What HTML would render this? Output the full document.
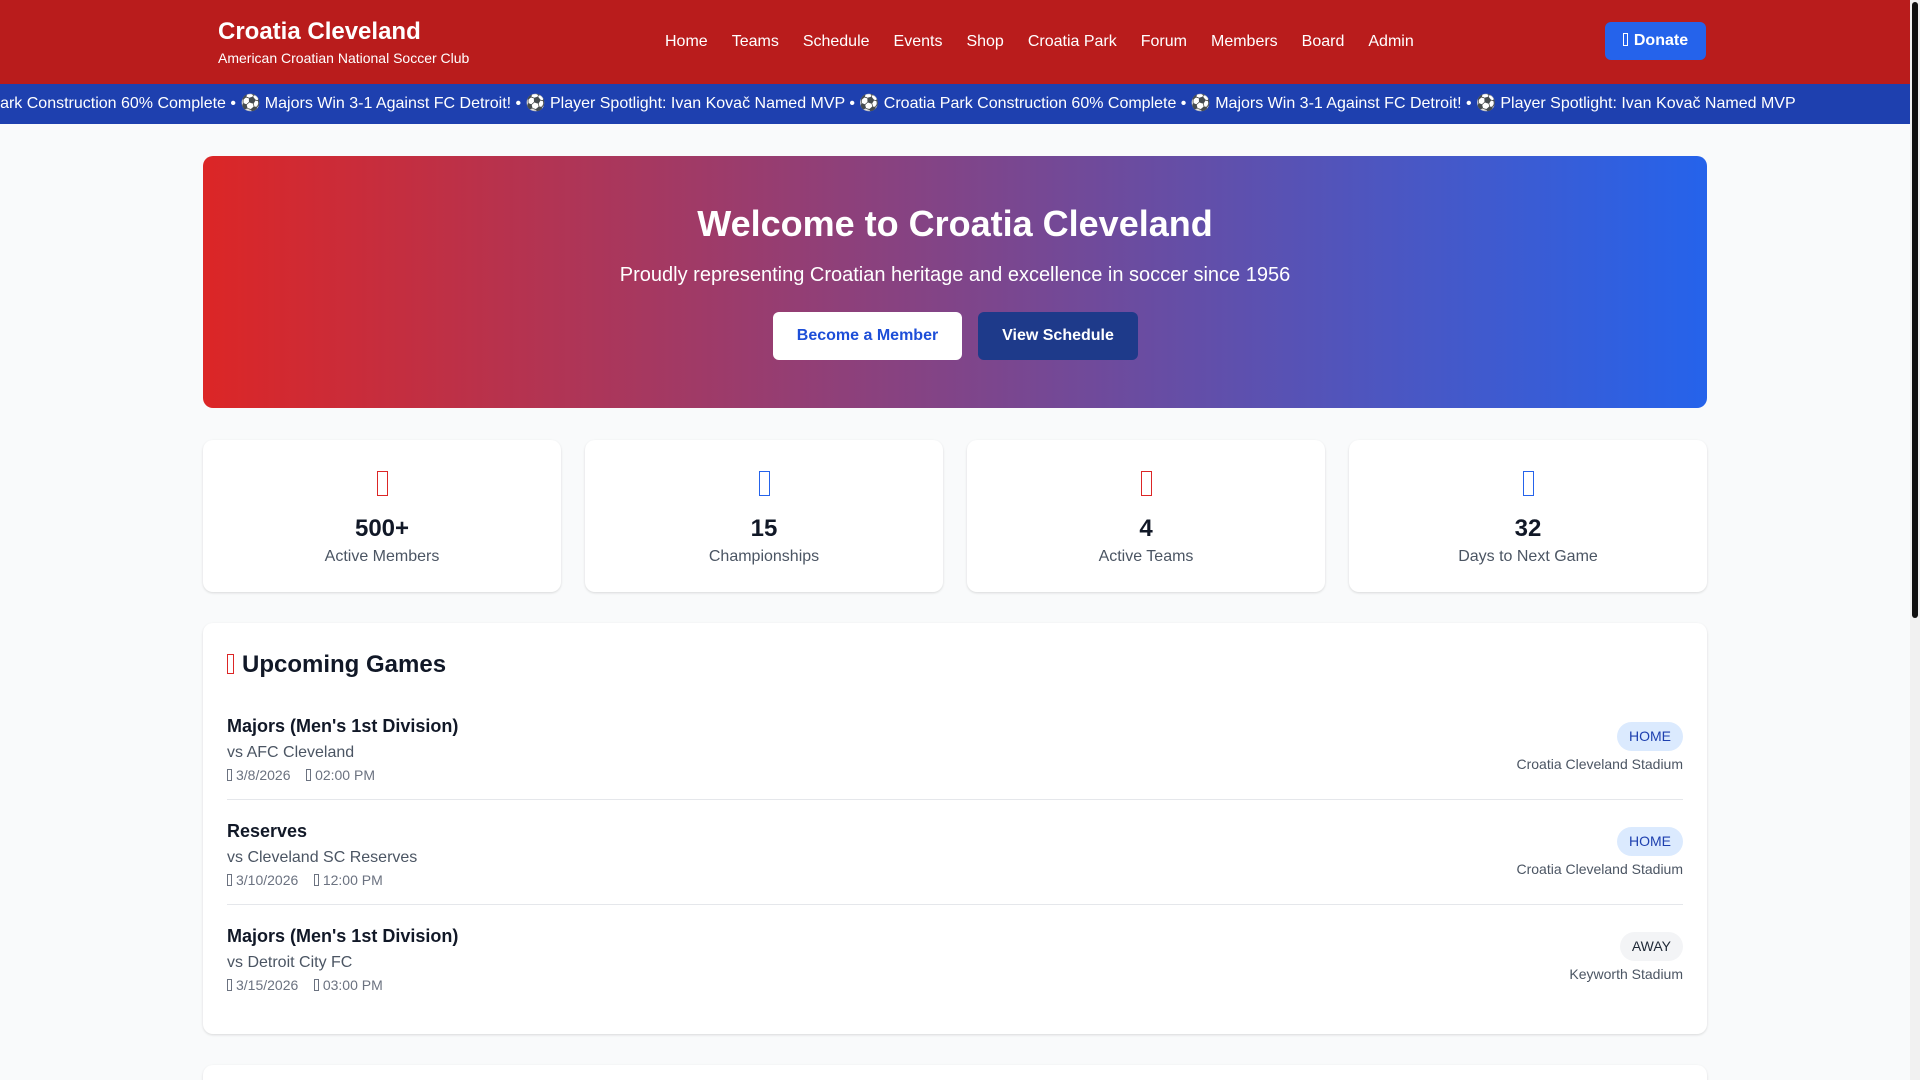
<!DOCTYPE html>
<html><head><meta charset="utf-8">
<style>
*{box-sizing:border-box;margin:0;padding:0}
html,body{width:1920px;height:1080px;overflow:hidden}
body{background:#f9fafb;font-family:"Liberation Sans",Arial,sans-serif;position:relative;color:#111827}
.abs{position:absolute}
.hdr{left:0;top:0;width:1910px;height:84px;background:#b91c1c;color:#fff}
.ticker{left:0;top:84px;width:1910px;height:40px;background:#1e40af;color:#fff;overflow:hidden;white-space:nowrap;font-size:16px;line-height:40px}
.nav a{color:#fff;text-decoration:none;font-size:16px;margin-right:24px}
.tofu{display:inline-block;border:1.5px solid currentColor;vertical-align:middle}
.card{background:#fff;border-radius:10px;box-shadow:0 1px 2px rgba(0,0,0,.08),0 1px 3px rgba(0,0,0,.06)}
.stat{top:440px;width:358px;height:152px;text-align:center}
.stat .tofu{width:11px;height:25px;margin-top:31px}
.stat .n{font-size:24px;font-weight:bold;margin-top:17px;line-height:32px}
.stat .l{font-size:16px;color:#4b5563;line-height:24px}
.row{left:24px;width:1456px;height:105px}
.row .t{position:absolute;top:17px;font-size:18px;font-weight:bold;line-height:28px}
.row .v{position:absolute;top:46px;font-size:16px;color:#4b5563;line-height:24px}
.row .d{position:absolute;top:70px;font-size:14px;color:#6b7280;line-height:20px}
.row .d .tofu{width:5px;height:12px;border-width:1px;margin-right:4px;vertical-align:-1px}
.badge{position:absolute;right:0;top:27px;height:29px;line-height:29px;padding:0 12px;border-radius:15px;font-size:14px}
.home{background:#dbeafe;color:#1e40af}
.away{background:#f3f4f6;color:#1f2937}
.stad{position:absolute;right:0;top:59px;font-size:14px;color:#4b5563;line-height:20px}
.sep{border-bottom:1px solid #e5e7eb}
</style></head><body>
<div class="abs hdr">
  <div class="abs" style="left:218px;top:16px;font-size:24px;font-weight:bold;line-height:32px">Croatia Cleveland</div>
  <div class="abs" style="left:218px;top:48px;font-size:14px;line-height:20px">American Croatian National Soccer Club</div>
  <div class="abs nav" style="left:665px;top:30px;line-height:24px;white-space:nowrap"><a>Home</a><a>Teams</a><a>Schedule</a><a>Events</a><a>Shop</a><a>Croatia Park</a><a>Forum</a><a>Members</a><a>Board</a><a>Admin</a></div>
  <div class="abs" style="left:1605px;top:22px;width:101px;height:38px;background:#2563eb;border-radius:6px;font-weight:bold;font-size:16px;line-height:38px;text-align:center"><span class="tofu" style="width:5px;height:13px;border-width:1px;margin-right:6px;vertical-align:-1px"></span>Donate</div>
</div>
<div class="abs ticker"><div class="abs" style="left:-91px;top:0">⚽ Croatia Park Construction 60% Complete • ⚽ Majors Win 3-1 Against FC Detroit! • ⚽ Player Spotlight: Ivan Kovač Named MVP • ⚽ Croatia Park Construction 60% Complete • ⚽ Majors Win 3-1 Against FC Detroit! • ⚽ Player Spotlight: Ivan Kovač Named MVP</div></div>

<div class="abs" style="left:203px;top:156px;width:1504px;height:252px;border-radius:10px;background:linear-gradient(90deg,#dc2626,#2563eb);color:#fff;text-align:center">
  <div style="font-size:36px;font-weight:bold;line-height:48px;margin-top:44px">Welcome to Croatia Cleveland</div>
  <div style="font-size:20px;line-height:28px;margin-top:13px">Proudly representing Croatian heritage and excellence in soccer since 1956</div>
  <div class="abs" style="left:570px;top:156px;width:189px;height:48px;background:#fff;color:#1d4ed8;border-radius:6px;font-weight:bold;font-size:16px;line-height:48px">Become a Member</div>
  <div class="abs" style="left:775px;top:156px;width:160px;height:48px;background:#1e3a8a;color:#fff;border-radius:6px;font-weight:bold;font-size:16px;line-height:48px">View Schedule</div>
</div>

<div class="abs card stat" style="left:203px"><span class="tofu" style="color:#dc2626"></span><div class="n">500+</div><div class="l">Active Members</div></div>
<div class="abs card stat" style="left:585px"><span class="tofu" style="color:#2563eb"></span><div class="n">15</div><div class="l">Championships</div></div>
<div class="abs card stat" style="left:967px"><span class="tofu" style="color:#dc2626"></span><div class="n">4</div><div class="l">Active Teams</div></div>
<div class="abs card stat" style="left:1349px"><span class="tofu" style="color:#2563eb"></span><div class="n">32</div><div class="l">Days to Next Game</div></div>

<div class="abs card" style="left:203px;top:623px;width:1504px;height:411px">
  <div class="abs" style="left:24px;top:25px;font-size:24px;font-weight:bold;line-height:34px"><span class="tofu" style="color:#dc2626;width:7px;height:20px;margin-right:8px;vertical-align:-2px"></span>Upcoming Games</div>
  <div class="abs row sep" style="top:72px">
    <div class="t">Majors (Men's 1st Division)</div><div class="v">vs AFC Cleveland</div>
    <div class="d"><span class="tofu"></span>3/8/2026 &nbsp;&nbsp;&nbsp;<span class="tofu"></span>02:00 PM</div>
    <div class="badge home">HOME</div><div class="stad">Croatia Cleveland Stadium</div>
  </div>
  <div class="abs row sep" style="top:177px">
    <div class="t">Reserves</div><div class="v">vs Cleveland SC Reserves</div>
    <div class="d"><span class="tofu"></span>3/10/2026 &nbsp;&nbsp;&nbsp;<span class="tofu"></span>12:00 PM</div>
    <div class="badge home">HOME</div><div class="stad">Croatia Cleveland Stadium</div>
  </div>
  <div class="abs row" style="top:282px">
    <div class="t">Majors (Men's 1st Division)</div><div class="v">vs Detroit City FC</div>
    <div class="d"><span class="tofu"></span>3/15/2026 &nbsp;&nbsp;&nbsp;<span class="tofu"></span>03:00 PM</div>
    <div class="badge away">AWAY</div><div class="stad">Keyworth Stadium</div>
  </div>
</div>

<div class="abs card" style="left:203px;top:1065px;width:1504px;height:60px"></div>

<div class="abs" style="left:1910px;top:0;width:10px;height:1080px;background:#f1f1f1"></div>
<div class="abs" style="left:1912px;top:2px;width:6px;height:616px;background:#111;border-radius:3px"></div>
</body></html>
